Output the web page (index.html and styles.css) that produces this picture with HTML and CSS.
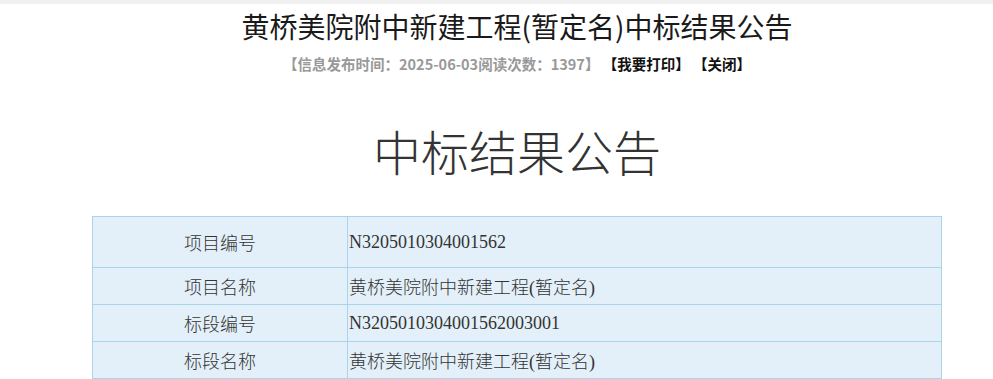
FILE: index.html
```html
<!DOCTYPE html>
<html lang="zh-CN">
<head>
<meta charset="utf-8">
<title>中标结果公告</title>
<link rel="stylesheet" href="styles.css">
</head>
<body>
<div class="topband"></div>
<div class="wrap">
  <h1 class="title">黄桥美院附中新建工程(暂定名)中标结果公告</h1>
  <div class="meta"><span class="gray">【信息发布时间：2025-06-03阅读次数：1397】</span> <span class="act">【我要打印】</span> <span class="act">【关闭】</span></div>
  <h2 class="heading">中标结果公告</h2>
  <table class="info">
    <tr class="first"><td class="label">项目编号</td><td class="value">N3205010304001562</td></tr>
    <tr><td class="label">项目名称</td><td class="value">黄桥美院附中新建工程(暂定名)</td></tr>
    <tr><td class="label">标段编号</td><td class="value">N3205010304001562003001</td></tr>
    <tr><td class="label">标段名称</td><td class="value">黄桥美院附中新建工程(暂定名)</td></tr>
  </table>
</div>
</body>
</html>
```
FILE: styles.css
```css
html, body { margin: 0; padding: 0; background: #fff; }
body { font-family: "Noto Sans CJK SC", "Noto Sans", sans-serif; color: #222; }
.topband { height: 4px; background: #f0f0f0; }
.wrap { margin: 0 51px 0 92px; }
.title {
  margin: 4px 0 0;
  font-size: 28px;
  line-height: 36px;
  font-weight: normal;
  text-align: center;
  color: #1a1a1a;
}
.meta {
  margin-top: 10px;
  font-size: 14.5px;
  line-height: 20px;
  font-weight: bold;
  text-align: center;
}
.meta .gray { color: #999; }
.meta .act { color: #111; }
.heading {
  margin: 51px 0 0;
  font-family: "Liberation Serif", "Noto Sans CJK SC", serif;
  font-size: 48px;
  line-height: 60px;
  font-weight: 300;
  text-align: center;
  color: #333;
}
.info {
  margin-top: 31px;
  width: 850px;
  border-collapse: collapse;
  background: #e3f0f9;
  font-family: "Liberation Serif", "Noto Sans CJK SC", serif;
  font-size: 18px;
  font-weight: 300;
  color: #333;
}
.info td {
  border: 1px solid #a9d4ea;
  height: 36px;
  padding: 0;
}
.info tr.first td { height: 50px; }
.info .label { width: 254px; text-align: center; }
.info .value { text-align: left; padding-left: 1px; }
```
